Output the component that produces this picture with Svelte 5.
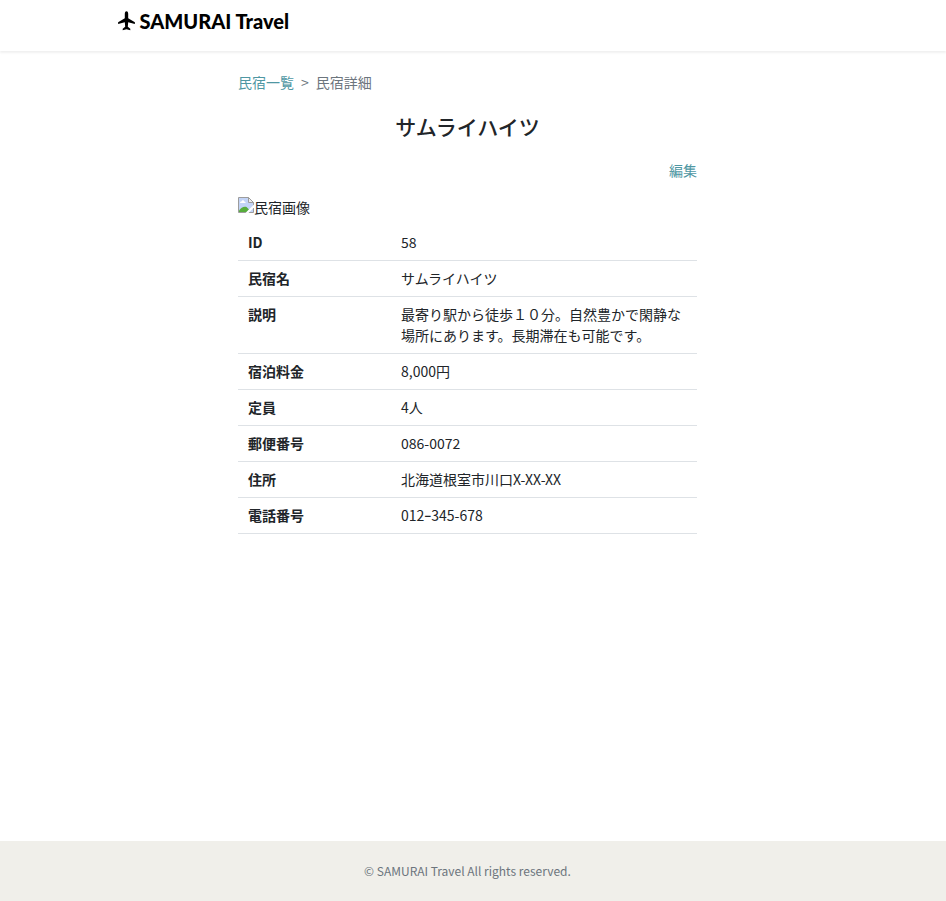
<script>
  const details = [
    { label: 'ID', value: '58' },
    { label: '民宿名', value: 'サムライハイツ' },
    { label: '説明', value: '最寄り駅から徒歩１０分。自然豊かで閑静な場所にあります。長期滞在も可能です。' },
    { label: '宿泊料金', value: '8,000円' },
    { label: '定員', value: '4人' },
    { label: '郵便番号', value: '086-0072' },
    { label: '住所', value: '北海道根室市川口X-XX-XX' },
    { label: '電話番号', value: '012ｰ345-678' }
  ];
</script>

<div class="page">
  <header>
    <div class="container">
      <a class="logo" href="#top">
        <svg viewBox="0 0 17 20" width="17" height="20" aria-hidden="true">
          <path d="M8.5 0.2C9.7 0.2 10.2 1.5 10.2 2.800V7.200L16.900 11.300V13L10.200 11.200L9.800 15.800L12.300 17.700V19.300L8.500 18.300L4.700 19.300V17.700L7.200 15.800L6.800 11.200L0.100 13V11.300L6.800 7.200V2.800C6.800 1.500 7.300 0.200 8.500 0.200Z" />
        </svg>
        <span>SAMURAI Travel</span>
      </a>
    </div>
  </header>

  <main>
    <div class="content">
      <nav aria-label="breadcrumb">
        <ol>
          <li><a href="#houses">民宿一覧</a></li>
          <li aria-current="page">民宿詳細</li>
        </ol>
      </nav>

      <h1>サムライハイツ</h1>

      <div class="actions"><a href="#edit">編集</a></div>

      <div class="photo">
        <svg viewBox="0 0 16 16" width="16" height="16" aria-hidden="true">
          <path d="M0.5 0.5H10.5L15.5 5.5V15.5H0.5Z" fill="#c3d4f7" stroke="#9c9c9c" />
          <path d="M2 6C2 4.800 3 4.500 3.500 4.500C4 2.800 6 3 6.300 4.500C7.500 4.500 7.700 5.300 7.500 6Z" fill="#fff" />
          <path d="M1 15V13.500C3 10.500 6 9 8.500 10L11 12.500L8.500 15Z" fill="#57ad3b" />
          <path d="M7.500 16L16 7.500V10.500L10.500 16Z" fill="#fff" />
          <path d="M10.500 0.500V5.500H15.500Z" fill="#eee" stroke="#9c9c9c" />
        </svg>
        <span>民宿画像</span>
      </div>

      <table>
        <tbody>
          {#each details as item}
            <tr>
              <th scope="row">{item.label}</th>
              <td>{item.value}</td>
            </tr>
          {/each}
        </tbody>
      </table>
    </div>
  </main>

  <footer><p>© SAMURAI Travel All rights reserved.</p></footer>
</div>

<style>
  .page {
    display: flex;
    flex-direction: column;
    min-height: 100vh;
    box-sizing: border-box;
    color: #212529;
    background: #fff;
    font: 14px/21px 'Noto Sans CJK JP', sans-serif;
  }
  .page * { box-sizing: border-box; }
  a { color: #4f97a3; text-decoration: none; }
  header, main, footer { padding-right: 11px; }
  header {
    height: 51px;
    box-shadow: 0 2px 2px rgba(0, 0, 0, 0.06);
  }
  .container {
    max-width: 720px;
    margin: 0 auto;
    padding: 9px 10px;
  }
  .logo {
    display: inline-flex;
    align-items: center;
    gap: 5px;
    color: #000;
    font: 900 20px/24px Lato, sans-serif;
  }
  main { flex: 1; }
  .content {
    width: 100%;
    max-width: 459px;
    margin: 0 auto;
    padding-top: 21px;
  }
  ol {
    display: flex;
    margin: 0 0 21px;
    padding: 0;
    list-style: none;
    color: #6c757d;
  }
  li + li::before { content: '>'; padding: 0 7px; }
  h1 {
    margin: 0 0 21px;
    text-align: center;
    font-size: 21px;
    line-height: 25px;
    font-weight: 500;
  }
  .actions { margin-bottom: 16px; text-align: right; }
  .photo { display: flex; margin-bottom: 7px; }
  table {
    width: 100%;
    border-collapse: collapse;
    table-layout: fixed;
  }
  tr { border-bottom: 1px solid #dee2e6; }
  th, td {
    padding: 7px 10px;
    text-align: left;
    vertical-align: top;
  }
  th { width: 33.333%; font-weight: 700; }
  footer {
    background: #f0efea;
    color: #6c757d;
    text-align: center;
  }
  footer p { margin: 0; padding: 20px 0; font-size: 12px; line-height: 20px; }
</style>
